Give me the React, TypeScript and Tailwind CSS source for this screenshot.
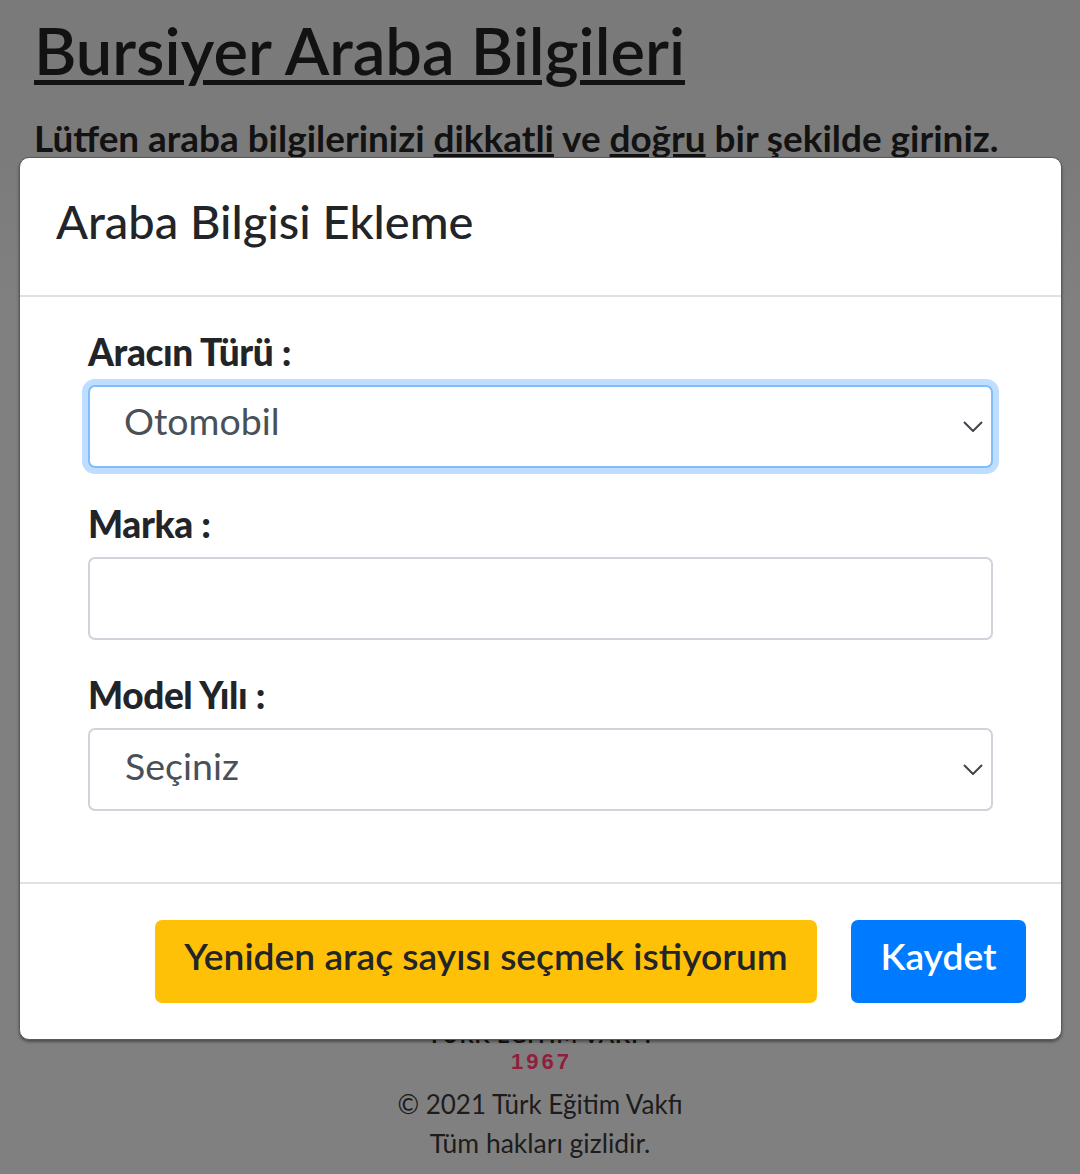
const labelClass = 'block text-[37px] leading-[42px] font-black text-[#212529] tracking-[-0.4px]';
const fieldClass = 'mt-[12px] flex h-[83px] w-full items-center justify-between rounded-[7px] border-2 border-[#ced4da] bg-white pl-[35px] pr-[8px] text-[37.5px] text-[#495057]';

function Chevron() {
  return (
    <svg width="20" height="11" viewBox="0 0 20 11" fill="none" stroke="#3f454b" strokeWidth="2">
      <path d="M1 1l9 9 9-9" />
    </svg>
  );
}

function SelectBox({ value, focused }: { value: string; focused?: boolean }) {
  return (
    <div className={focused ? 'mt-[12px] flex h-[83px] w-full items-center justify-between rounded-[7px] border-2 border-[#80bdff] bg-white pl-[34px] pr-[8px] text-[37.5px] text-[#495057] shadow-[0_0_0_6px_#bfdeff]' : fieldClass}>
      <span className={focused ? 'mb-[11px]' : 'mb-[7px]'}>{value}</span>
      <Chevron />
    </div>
  );
}

export default function App() {
  return (
    <div className="relative h-[1174px] w-full overflow-hidden bg-[#808080] font-['Lato',sans-serif]">
      <div className="absolute inset-x-0 top-0 h-[300px] bg-[linear-gradient(to_bottom,#7a7a7a_0%,#7b7b7b_50%,#808080_100%)]" />
      <div className="relative flex h-full flex-col px-[34px]">
        <h1 className="mt-[12px] text-[65px] leading-[76px] font-semibold text-[#121212] underline decoration-[length:5px] underline-offset-[5px]">Bursiyer Araba Bilgileri</h1>
        <p className="mt-[29px] text-[36.9px] leading-[42px] font-bold text-[#121212]">
          Lütfen araba bilgilerinizi <u>dikkatli</u> ve <u>doğru</u> bir şekilde giriniz.
        </p>
        <div className="mt-auto flex flex-col items-center pb-[11px] text-[26px] text-[#1c1c1c]">
          <span className="text-[22px] leading-[24px] font-bold tracking-[1px] text-[#161616]">TÜRK EĞİTİM VAKFI</span>
          <span className="mt-[5px] ml-[3px] font-['Liberation_Sans',sans-serif] text-[22px] leading-[20px] font-black tracking-[3px] text-[#8f1f3c]">1967</span>
          <span className="mt-[13px] leading-[39px]">© 2021 Türk Eğitim Vakfı</span>
          <span className="text-[26.5px] leading-[39px]">Tüm hakları gizlidir.</span>
        </div>
      </div>

      <div className="absolute top-[157px] right-[18px] left-[19px] flex h-[883px] flex-col rounded-[10px] border border-[#5a5a5a] bg-white shadow-[0_2px_3px_rgba(0,0,0,0.4)]">
        <div className="flex h-[139px] items-center border-b-2 border-[#dee2e6] px-[36px] pb-[12px]">
          <h2 className="text-[47px] leading-[56px] font-medium text-[#212529]">Araba Bilgisi Ekleme</h2>
        </div>
        <div className="h-[587px] border-b-2 border-[#dee2e6] px-[68px] pt-[34px]">
          <label className={labelClass}>Aracın Türü :</label>
          <SelectBox value="Otomobil" focused />
          <label className={`${labelClass} mt-[35px]`}>Marka :</label>
          <div className={fieldClass} />
          <label className={`${labelClass} mt-[34px]`}>Model Yılı :</label>
          <SelectBox value="Seçiniz" />
        </div>
        <div className="flex flex-1 items-start justify-end gap-[34px] pt-[36px] pr-[35px]">
          <button className="flex h-[83px] w-[662px] items-center justify-center rounded-[7px] bg-[#ffc107] pb-[12px] text-[37.2px] font-semibold text-[#212529]">Yeniden araç sayısı seçmek istiyorum</button>
          <button className="flex h-[83px] w-[175px] items-center justify-center rounded-[7px] bg-[#007bff] pb-[12px] text-[37.2px] font-semibold text-white">Kaydet</button>
        </div>
      </div>
    </div>
  );
}
